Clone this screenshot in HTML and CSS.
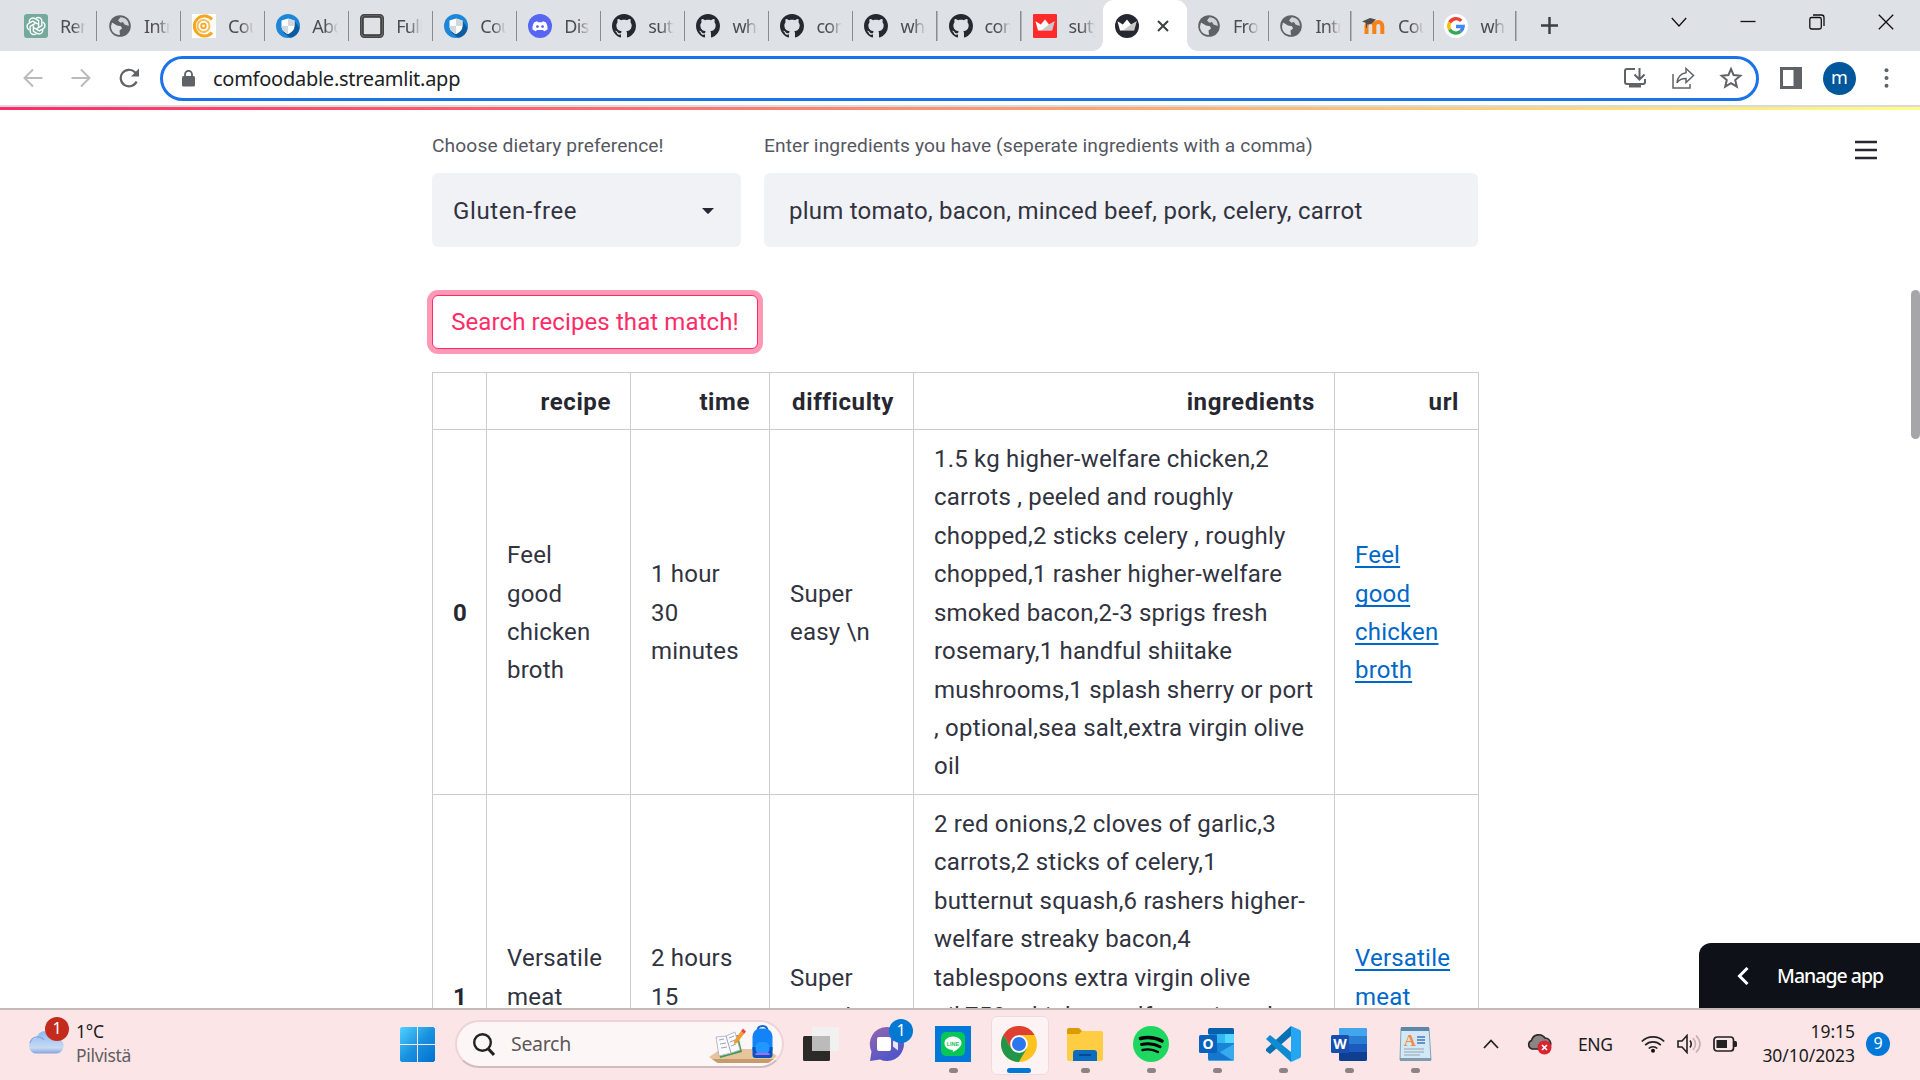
FILE: index.html
```html
<!DOCTYPE html>
<html lang="en">
<head>
<meta charset="utf-8">
<title>Comfoodable</title>
<link rel="stylesheet" href="styles.css">
</head>
<body>
<svg class="sprite" aria-hidden="true">
  <symbol id="globe" viewBox="0 0 24 24"><circle cx="12" cy="12" r="10.8" fill="#5f6368"/><path fill="#dee1e6" d="M4 8.500L9 11.500l4 .8 1 2.200-2.500 2 .5 4.500C6.500 21 3 17 3 12.500z"/><path fill="#dee1e6" d="M12.500 3.300L10 6.500l2.500 2.200 2.500-.7 1.500 2.500 4.300 1.500C21 7 17.500 3.500 12.500 3.300z" opacity=".9"/></symbol>
  <symbol id="github" viewBox="0 0 16 16"><path fill="#24292f" d="M8 0C3.580 0 0 3.580 0 8c0 3.540 2.290 6.530 5.470 7.590.4.070.55-.17.55-.38 0-.19-.01-.82-.01-1.490-2.010.37-2.530-.49-2.690-.94-.09-.23-.48-.94-.82-1.130-.28-.15-.68-.52-.01-.53.63-.01 1.080.58 1.230.82.72 1.210 1.870.87 2.330.66.07-.52.28-.87.51-1.070-1.780-.2-3.640-.89-3.640-3.950 0-.87.31-1.590.82-2.150-.08-.2-.36-1.020.08-2.120 0 0 .67-.21 2.200.82.64-.18 1.320-.27 2-.27s1.360.09 2 .27c1.530-1.040 2.200-.82 2.200-.82.44 1.100.16 1.920.08 2.120.51.56.82 1.270.82 2.150 0 3.070-1.870 3.750-3.650 3.950.29.25.54.73.54 1.480 0 1.070-.01 1.930-.01 2.200 0 .21.15.46.55.38A8.010 8.010 0 0 0 16 8c0-4.420-3.580-8-8-8z"/></symbol>
  <symbol id="shield" viewBox="0 0 24 24"><circle cx="12" cy="12" r="12" fill="#1c86da"/><path d="M18 6l5.500 8a12 12 0 0 1-9.500 9.800L7 18z" fill="#0c5c9f"/><path d="M12 4.500l6.500 2V12c0 4-3 6.500-6.500 8-3.500-1.500-6.500-4-6.500-8V6.500z" fill="#fff"/><path d="M12 4.500l6.500 2V12H12zM5.500 12H12v8c-3.500-1.500-6.500-4-6.500-8z" fill="#d3d7dc"/></symbol>
  <symbol id="crown" viewBox="0 0 24 24"><path d="M2.500 7.200l5.300 3.300L12 5.500l4 5 5.700-3.300-2.600 9.300H5z" fill="#fff"/><path d="M21.700 7.200l-2.600 9.300H8L16 10.500z" fill="#888" opacity=".45"/></symbol>
</svg>

<header class="tabs">
  <div class="tab"><svg class="fav" viewBox="0 0 24 24"><rect width="24" height="24" rx="3" fill="#75a99b"/><g fill="none" stroke="#fff" stroke-width="1.400"><path id="petal" d="M12 4.200a3.700 3.700 0 0 1 5.900 3.200v4.200l-5.200 3"/><use href="#petal" transform="rotate(60 12 12)"/><use href="#petal" transform="rotate(120 12 12)"/><use href="#petal" transform="rotate(180 12 12)"/><use href="#petal" transform="rotate(240 12 12)"/><use href="#petal" transform="rotate(300 12 12)"/></g></svg><span>Ren</span></div>
  <div class="tab"><svg class="fav"><use href="#globe"/></svg><span>Intr</span></div>
  <div class="tab"><svg class="fav" viewBox="0 0 24 24"><rect width="24" height="24" fill="#fff"/><g fill="none" stroke="#f5a623"><path d="M20 5.500a10 10 0 1 0 0 13" stroke-width="3"/><circle cx="11.500" cy="12" r="6" stroke-width="2" stroke="#f8bd55"/><circle cx="11.500" cy="12" r="2.300" stroke-width="1.800"/></g></svg><span>Cou</span></div>
  <div class="tab"><svg class="fav"><use href="#shield"/></svg><span>Abo</span></div>
  <div class="tab"><svg class="fav" viewBox="0 0 24 24"><rect x=".7" y=".7" width="22.600" height="22.600" rx="3.500" fill="#777" stroke="#444" stroke-width="1.400"/><rect x="3" y="3" width="18" height="18" rx="1.500" fill="#dfe1e4" stroke="#333" stroke-width="1.500"/></svg><span>Full</span></div>
  <div class="tab"><svg class="fav"><use href="#shield"/></svg><span>Cou</span></div>
  <div class="tab"><svg class="fav" viewBox="0 0 24 24"><circle cx="12" cy="12" r="12" fill="#5865f2"/><path fill="#fff" d="M9.300 7.300c-1.300.2-2.300.6-3.100 1C4.800 10.500 4.300 13 4.500 15.600c1 .8 2.200 1.300 3.500 1.600l.8-1.300h6.400l.8 1.300c1.300-.3 2.500-.8 3.500-1.600.2-2.600-.3-5.100-1.700-7.300-.8-.4-1.800-.8-3.100-1l-.5.900H9.800z"/><circle cx="9.400" cy="12.600" r="1.400" fill="#5865f2"/><circle cx="14.600" cy="12.600" r="1.400" fill="#5865f2"/></svg><span>Dis</span></div>
  <div class="tab"><svg class="fav"><use href="#github"/></svg><span>suty</span></div>
  <div class="tab"><svg class="fav"><use href="#github"/></svg><span>wha</span></div>
  <div class="tab"><svg class="fav"><use href="#github"/></svg><span>com</span></div>
  <div class="tab"><svg class="fav"><use href="#github"/></svg><span>wha</span></div>
  <div class="tab"><svg class="fav"><use href="#github"/></svg><span>com</span></div>
  <div class="tab before-active"><svg class="fav" viewBox="0 0 24 24"><rect width="24" height="24" rx="1" fill="#ff2b2b"/><use href="#crown"/></svg><span>suty</span></div>
  <div class="tab active"><svg class="fav" viewBox="0 0 24 24"><circle cx="12" cy="12" r="12" fill="#262730"/><use href="#crown"/></svg><svg class="tab-close" viewBox="0 0 12 12"><path d="M1 1l10 10M11 1L1 11" stroke="#3c4043" stroke-width="2"/></svg></div>
  <div class="tab late"><svg class="fav"><use href="#globe"/></svg><span>Fro</span></div>
  <div class="tab late"><svg class="fav"><use href="#globe"/></svg><span>Intr</span></div>
  <div class="tab late"><svg class="fav" viewBox="0 0 24 24"><path d="M4.500 20V12a3.600 3.600 0 0 1 7.800 0v8M12.300 20V12a3.800 3.800 0 0 1 8 0v8" fill="none" stroke="#f98012" stroke-width="4"/><path d="M0 7.500L8 4l6 1.500-5 4.500-4 .5v3l-1 .5V9z" fill="#4d4d4d"/></svg><span>Cou</span></div>
  <div class="tab late"><svg class="fav" viewBox="0 0 24 24"><circle cx="12" cy="12" r="12" fill="#fff"/><g fill="none" stroke-width="3.400"><path d="M17.300 6.900A7.200 7.200 0 0 0 5.700 8.500" stroke="#ea4335"/><path d="M5.700 8.500a7.200 7.200 0 0 0 0 7" stroke="#fbbc05"/><path d="M5.700 15.500a7.200 7.200 0 0 0 11 1.800" stroke="#34a853"/><path d="M16.700 17.300a7.200 7.200 0 0 0 2.400-4.800H12" stroke="#4285f4"/></g></svg><span>wh</span></div>
  <svg class="new-tab" viewBox="0 0 18 18"><path d="M9 0v18M0 9h18" stroke="#3c4043" stroke-width="2.600"/></svg>
  <div class="window-buttons">
    <svg viewBox="0 0 16 16"><path d="M.8 4L8 12l7.200-8"/></svg>
    <svg viewBox="0 0 16 16"><path d="M.5 7.500h15"/></svg>
    <svg viewBox="0 0 16 16"><rect x=".8" y="3.500" width="11.500" height="11.500" rx="1.800"/><path d="M4 1h8.500Q15 1 15 3.500V12"/></svg>
    <svg viewBox="0 0 16 16"><path d="M.8.800l14.400 14.400M15.200.8L.8 15.200"/></svg>
  </div>
</header>

<nav class="toolbar">
  <svg class="nav-icon faded" viewBox="0 0 20 20"><path d="M19.500 10H2M10 1.500L1.500 10l8.500 8.500"/></svg>
  <svg class="nav-icon faded" viewBox="0 0 20 20"><path d="M.5 10H18M10 1.500l8.500 8.500-8.500 8.500"/></svg>
  <svg class="nav-icon reload" viewBox="0 0 20 20"><path d="M17.600 13.500A8.300 8.300 0 1 1 16 4.300L18 6.500"/><path d="M20 .5v8h-8z" fill="#5f6368" stroke="none"/></svg>
  <div class="omnibox">
    <svg class="lock" viewBox="0 0 13 17"><rect y="6" width="13" height="10.500" rx="1.500" fill="#5f6368"/><path d="M3 7V4.300a3.500 3.500 0 0 1 7 0V7" fill="none" stroke="#5f6368" stroke-width="1.800"/></svg>
    <span class="url">comfoodable.streamlit.app</span>
    <svg class="box-icon" viewBox="0 0 24 24"><path d="M12 3H4Q2 3 2 5v11q0 2 2 2h16q2 0 2-2v-3M16.500 2v11M11.500 8.500l5 5 5-5" /><path d="M6 18h12v3.500H6z" fill="#5f6368" stroke="none"/></svg>
    <svg class="box-icon thin" viewBox="0 0 24 24"><path d="M2 8v14h17v-4"/><path d="M15 2.500L22.500 9.500 15 16.500V12.500c-4 0-7 1-9 4.500.5-5.500 3.500-9.500 9-10.300z"/></svg>
    <svg class="box-icon" viewBox="0 0 24 24"><path d="M12 3l2.600 6.100 6.700.6-5.100 4.400 1.600 6.500L12 17.100l-5.800 3.500 1.600-6.500-5.100-4.400 6.700-.6z"/></svg>
  </div>
  <svg class="panel-icon" viewBox="0 0 22 22"><path fill="#5f6368" fill-rule="evenodd" d="M0 0h22v22H0zM3 3v16h10.500V3z"/></svg>
  <div class="avatar">m</div>
  <svg class="dots" viewBox="0 0 4 20"><circle cx="2" cy="2.200" r="2"/><circle cx="2" cy="10" r="2"/><circle cx="2" cy="17.800" r="2"/></svg>
</nav>

<main class="page">
  <div class="rainbow"></div>
  <svg class="menu" viewBox="0 0 22 20"><path d="M0 2h22M0 10h22M0 18h22" stroke="#262730" stroke-width="2.600"/></svg>
  <div class="scroll-thumb"></div>
  <div class="content">
    <div class="fields">
      <div class="field"><label>Choose dietary preference!</label>
        <div class="input select"><span>Gluten-free</span><svg viewBox="0 0 12 6"><path d="M0 0h12L6.500 5.700h-1z" fill="#262730"/></svg></div></div>
      <div class="field wide"><label>Enter ingredients you have (seperate ingredients with a comma)</label>
        <div class="input text-input">plum tomato, bacon, minced beef, pork, celery, carrot</div></div>
    </div>
    <button class="search-button">Search recipes that match!</button>
    <table class="recipes">
      <colgroup><col class="c-index"><col class="c-recipe"><col class="c-time"><col class="c-difficulty"><col class="c-ingredients"><col class="c-url"></colgroup>
      <thead><tr><th></th><th>recipe</th><th>time</th><th>difficulty</th><th>ingredients</th><th>url</th></tr></thead>
      <tbody>
        <tr>
          <th>0</th>
          <td>Feel<br>good<br>chicken<br>broth</td>
          <td>1 hour<br>30<br>minutes</td>
          <td>Super<br>easy \n</td>
          <td>1.5 kg higher-welfare chicken,2<br>carrots , peeled and roughly<br>chopped,2 sticks celery , roughly<br>chopped,1 rasher higher-welfare<br>smoked bacon,2-3 sprigs fresh<br>rosemary,1 handful shiitake<br>mushrooms,1 splash sherry or port<br>, optional,sea salt,extra virgin olive<br>oil</td>
          <td><a href="#">Feel<br>good<br>chicken<br>broth</a></td>
        </tr>
        <tr class="second">
          <th>1</th>
          <td>Versatile<br>meat<br>&nbsp;</td>
          <td>2 hours<br>15<br>&nbsp;</td>
          <td>Super<br>easy \n</td>
          <td>2 red onions,2 cloves of garlic,3<br>carrots,2 sticks of celery,1<br>butternut squash,6 rashers higher-<br>welfare streaky bacon,4<br>tablespoons extra virgin olive<br>oil,750 g higher-welfare minced<br>&nbsp;<br>&nbsp;<br>&nbsp;<br>&nbsp;</td>
          <td><a href="#">Versatile<br>meat<br>&nbsp;</a></td>
        </tr>
      </tbody>
    </table>
  </div>
  <div class="manage"><svg viewBox="0 0 12 18"><path d="M10.500 1L2.500 9l8 8" fill="none" stroke="#fff" stroke-width="3"/></svg>Manage app</div>
</main>

<footer class="taskbar">
  <div class="weather">
    <svg viewBox="0 0 36 24"><defs><linearGradient id="cl" x2="0" y2="1"><stop stop-color="#8db8f2"/><stop offset=".75" stop-color="#c8daf3"/><stop offset="1" stop-color="#7fa5df"/></linearGradient></defs><path d="M8 23.500a7.500 7.500 0 0 1-1-15A10.500 10.500 0 0 1 27 8a7.800 7.800 0 0 1 1 15.500z" fill="url(#cl)"/><path d="M1 13a8 8 0 0 1 14-3" fill="none" stroke="#7fa9e8" stroke-width="1.200"/></svg>
    <b class="badge red">1</b>
    <div><p>1°C</p><p class="muted">Pilvistä</p></div>
  </div>

  <svg class="start" viewBox="0 0 35 35"><defs><linearGradient id="win" x2="1" y2="1"><stop stop-color="#4fd2ff"/><stop offset=".5" stop-color="#1a92e0"/><stop offset="1" stop-color="#0070cf"/></linearGradient></defs><path fill="url(#win)" d="M1.500 0H17v17H0V1.500zM18 0h15.500L35 1.500V17H18zM0 18h17v17H1.500L0 33.500zM18 18h17v15.500L33.500 35H18z"/></svg>

  <div class="search">
    <svg class="glass" viewBox="0 0 22 23"><circle cx="9.500" cy="9.500" r="8.300" fill="none" stroke="#222" stroke-width="2.400"/><path d="M15.500 16l5.500 6" stroke="#222" stroke-width="3"/></svg>
    <span>Search</span>
    <svg class="books" viewBox="0 0 68 38"><path d="M0 32l12-8h46l10 7-8 7H8z" fill="#e8c49c"/><path d="M3 34h62l-6 4H9z" fill="#c89b6c"/><path d="M8 14l21-4 4 17-22 6z" fill="#3f9a50"/><path d="M7 12l10-1 9-4 5 18-9 3-12 3z" fill="#fafaff" stroke="#b8bac9"/><path d="M17 11l5 17M10 15l5-1M11 19l6-1M12 23l6-1M20 13l5-2M21 17l5-2M22 21l5-2" stroke="#9ca1b5" stroke-width="1"/><path d="M25 16l7-10 3 3-7 9-3 1z" fill="#f49b32"/><path d="M32 6l2-2.500 3 3L35 9z" fill="#e04b44"/><path d="M48.500 6q0-5 5-5t5 5" fill="none" stroke="#1267d3" stroke-width="2"/><rect x="43.500" y="3.500" width="20" height="28.500" rx="8" fill="#1284f8"/><path d="M43.500 22h20v8q0 3-3 3h-14q-3 0-3-3z" fill="#0753bf"/><rect x="46.500" y="17" width="14" height="12" rx="5" fill="#2198ff"/><path d="M46.500 29h14" stroke="#ae68ec" stroke-width="2"/></svg>
  </div>

  <div class="apps">
    <div class="app"><svg viewBox="0 0 36 36"><rect x="0" y="10" width="27" height="25" rx="1.500" fill="#2c2a29"/><rect x="9" y="1" width="27" height="24" rx="1.500" fill="#f1f1f1"/><path d="M9 10h18v15H9z" fill="#bbb"/></svg></div>
    <div class="app"><svg viewBox="0 0 36 36"><defs><linearGradient id="chat" x2=".6" y2="1"><stop stop-color="#9567ae"/><stop offset="1" stop-color="#4f55c9"/></linearGradient></defs><path d="M18 1a17 17 0 1 1-7 32.500L1 35l1.500-9.500A17 17 0 0 1 18 1z" fill="url(#chat)"/><rect x="8" y="11" width="14" height="14" rx="2" fill="#fff"/><path d="M24 15.500l5-4v13l-5-4z" fill="#e8e7fa"/></svg><b class="badge blue">1</b></div>
    <div class="app running"><svg viewBox="0 0 36 36"><path fill="#0078d7" d="M0 0h36v36H0z"/><rect x="6" y="6" width="24" height="24" rx="5" fill="#06c755"/><path d="M18 10.500c5 0 8.500 3 8.500 6.700 0 3.500-5 6.800-8 8.600-.8.400-.8-.5-.7-1.800-4.800-.2-8.300-3-8.300-6.800 0-3.700 3.500-6.700 8.500-6.700z" fill="#fff"/><text x="18" y="19.500" class="line-word">LINE</text></svg></div>
    <div class="app current"><svg viewBox="0 0 36 36"><circle cx="18" cy="18" r="18" fill="#fcc31f"/><path d="M2.400 9A18 18 0 0 1 33.600 9H18L10.200 22.500z" fill="#df3f32"/><path d="M2.400 9l7.800 13.500L18 27l-.2 9A18 18 0 0 1 2.400 9z" fill="#21964a"/><path d="M17.800 36l8-13.500L18 27l-4-1z" fill="#21964a"/><circle cx="18" cy="18" r="8.800" fill="#fff"/><circle cx="18" cy="18" r="7" fill="#2b78ee"/></svg></div>
    <div class="app running"><svg viewBox="0 0 36 36"><path d="M0 4q0-2 2-2h10l4 4v4H0z" fill="#dc9a05"/><path d="M0 8h12l3-3h19q2 0 2 2v26q0 2-2 2H2q-2 0-2-2z" fill="#ffcd43"/><path d="M6 35v-8q0-3 3-3h18q3 0 3 3v8z" fill="#0c6cc0"/><path d="M12 29h12" stroke="#06498f" stroke-width="2"/></svg></div>
    <div class="app running"><svg viewBox="0 0 36 36"><circle cx="18" cy="18" r="18" fill="#1ed760"/><g fill="none" stroke="#000" stroke-linecap="round"><path d="M7.500 12.500q11-3 21.500 2.500" stroke-width="3.600"/><path d="M8.500 18.500q10-2.500 18.500 2.200" stroke-width="3"/><path d="M9.500 24q8.500-2 15.500 2" stroke-width="2.400"/></g></svg></div>
    <div class="app running"><svg viewBox="0 0 36 36"><path d="M10 2h23q2 0 2 2v29q0 2-2 2H11q-2 0-2-2z" fill="#1685d8"/><path d="M9 4q0-2 2-2h22q2 0 2 2v4H9z" fill="#0762ae"/><path d="M18 8h8v9h-8z" fill="#30b7ef"/><path d="M26 8h9v9h-9z" fill="#54d6ff"/><path d="M9 33l26-15v15q0 2-2 2H11z" fill="#39a9ee"/><path d="M9 19l24 15H11q-2 0-2-2z" fill="#1677cf"/><rect y="9" width="18" height="18" rx="1.500" fill="#0a62bd"/><text x="9" y="23" class="letter">O</text></svg></div>
    <div class="app running"><svg viewBox="0 0 36 36"><path d="M1 23L26 0v10L5 28l-4-3z" fill="#0871b3"/><path d="M26 0l9 4q1 .5 1 2v24q0 1.500-1 2l-9 4z" fill="#25a6f2"/><path d="M1 13l4-4 21 17v10z" fill="#108ad1"/></svg></div>
    <div class="app running"><svg viewBox="0 0 36 36"><rect x="8" y="2" width="28" height="33" rx="2" fill="#1a5bbd"/><path d="M8 10V4q0-2 2-2h24q2 0 2 2v6z" fill="#42a5ee"/><path d="M8 10h28v8H8z" fill="#2b7cd3"/><path d="M8 26h28v7q0 2-2 2H10q-2 0-2-2z" fill="#103f91"/><rect y="9" width="18" height="18" rx="1.500" fill="#174fb1"/><text x="9" y="23" class="letter">W</text></svg></div>
    <div class="app running"><svg viewBox="0 0 36 36"><path d="M4 2h28l2 32H3z" fill="#d3e8f6" stroke="#86a2b7"/><path d="M4 1h28v4H4z" fill="#5e87a7"/><path d="M3 32h31v3H3z" fill="#809dae"/><text x="13" y="20" class="wordpad">A</text><path d="M20 11h8M20 14h8M20 17h8" stroke="#4677b9" stroke-width="1.500"/><path d="M7 23h20M7 26h20M7 29h16" stroke="#a8bac7" stroke-width="1.300"/></svg></div>
  </div>

  <div class="tray">
    <svg class="caret" viewBox="0 0 16 10"><path d="M1 9l7-7.500L15 9" fill="none" stroke="#222" stroke-width="1.800"/></svg>
    <svg class="cloud" viewBox="0 0 25 22"><path d="M5 16a4.500 4.500 0 0 1-.5-8.500A7.500 7.500 0 0 1 18 5a6 6 0 0 1 3 11z" fill="#8b8586" stroke="#2b2728" stroke-width="1.600"/><circle cx="17.500" cy="14.500" r="7" fill="#d9252e"/><path d="M15 12l5 5m0-5l-5 5" stroke="#fff" stroke-width="1.700"/></svg>
    <span class="lang">ENG</span>
    <svg class="wifi" viewBox="0 0 24 18"><g fill="none" stroke="#222" stroke-width="1.700"><path d="M.8 6.500a15.800 15.800 0 0 1 22.400 0"/><path d="M4.200 10.200a11 11 0 0 1 15.600 0"/><path d="M7.700 13.500a6.100 6.100 0 0 1 8.600 0"/></g><circle cx="12" cy="15.800" r="2" fill="#111"/></svg>
    <svg class="volume" viewBox="0 0 24 20"><g fill="none" stroke="#222" stroke-width="1.600"><path d="M1 7h4l5-5.500v17L5 13H1z"/><path d="M13 6.500q2.500 3.500 0 7"/><path d="M16 4q5 6 0 12M19 1.500q8 8.500 0 17" stroke="#c5afb2"/></g></svg>
    <svg class="battery" viewBox="0 0 24 16"><rect x="1" y="1" width="19.500" height="14" rx="3" fill="none" stroke="#222" stroke-width="1.700"/><rect x="3.500" y="4" width="10.500" height="8" fill="#222"/><path d="M21 5h1.500q1.500 0 1.500 1.500v3q0 1.500-1.500 1.500H21z" fill="#222"/></svg>
    <div class="clock"><p>19:15</p><p>30/10/2023</p></div>
    <b class="count">9</b>
  </div>
</footer>
</body>
</html>
```
FILE: styles.css
```css
* { box-sizing: border-box; }
body { margin: 0; width: 1920px; height: 1080px; overflow: hidden; display: flex; flex-direction: column; background: #fff; font-family: "Noto Sans", sans-serif; }
p { margin: 0; }
svg { display: block; flex: none; }
.sprite { position: absolute; width: 0; height: 0; }

/* tab strip */
.tabs { height: 51px; flex: none; display: flex; align-items: center; padding-left: 13px; background: #dee1e6; }
.tab { flex: none; width: 84.050px; height: 51px; padding-left: 11px; display: flex; align-items: center; gap: 12px; background: linear-gradient(#888b90, #888b90) 100% 11px / 1.500px 30px no-repeat; color: #4a4d51; font-size: 18px; }
.tab span { width: 26px; overflow: hidden; white-space: nowrap; letter-spacing: -.7px; -webkit-mask-image: linear-gradient(90deg, #000 50%, transparent); mask-image: linear-gradient(90deg, #000 50%, transparent); }
.fav { width: 24px; height: 24px; margin-top: 1px; }
.tab.before-active { background: none; width: 81.400px; }
.tab.active { width: 84px; padding-left: 12px; gap: 18px; border-radius: 11px 11px 0 0; background: #fff; position: relative; }
.tab.active::before, .tab.active::after { content: ""; position: absolute; bottom: 0; width: 10px; height: 10px; }
.tab.active::before { right: 100%; background: radial-gradient(circle at 0 0, #dee1e6 9.500px, #fff 10px); }
.tab.active::after { left: 100%; background: radial-gradient(circle at 100% 0, #dee1e6 9.500px, #fff 10px); }
.tab-close { width: 12px; height: 12px; }
.tab.late { width: 82.500px; padding-left: 10px; }
.new-tab { width: 17px; height: 17px; margin-left: 24px; }
.window-buttons { margin: 0 26px 8px auto; display: flex; gap: 53px; }
.window-buttons svg { width: 16px; height: 16px; fill: none; stroke: #111; stroke-width: 1.300; }

/* address bar */
.toolbar { height: 56px; flex: none; display: flex; align-items: center; padding-left: 23px; border-bottom: 2px solid #d9dade; background: #fff; }
.nav-icon { width: 20px; height: 20px; margin-right: 28px; fill: none; stroke: #5f6368; stroke-width: 2.200; }
.nav-icon.faded { stroke: #b9bbbe; stroke-width: 2; }
.nav-icon.reload { margin-right: 21px; }
.omnibox { width: 1599px; height: 45px; padding: 0 13px 0 19px; display: flex; align-items: center; border: 3px solid #1a73e8; border-radius: 23px; color: #202124; }
.lock { width: 13px; height: 17px; }
.url { margin: 0 auto 0 18px; font-size: 20px; letter-spacing: -.26px; }
.box-icon { width: 24px; height: 24px; margin-left: 24px; fill: none; stroke: #5f6368; stroke-width: 2; }
.box-icon.thin { stroke-width: 1.500; }
.panel-icon { width: 22px; height: 22px; margin-left: 21px; }
.avatar { width: 33px; height: 33px; margin-left: 21px; border-radius: 50%; background: #01579b; color: #fff; font: 18px/31px "Noto Sans", sans-serif; text-align: center; }
.dots { width: 5px; height: 20px; margin-left: 28px; fill: #5f6368; }

/* app page */
.page { flex: none; height: 901px; position: relative; overflow: hidden; font-family: Roboto, sans-serif; font-size: 24px; line-height: 38.400px; letter-spacing: .2px; color: #31333f; }
.rainbow { height: 3px; background: linear-gradient(90deg, #ff2b67, #ff6f6f 33%, #ffb272 63%, #ffff80); }
.menu { position: absolute; left: 1855px; top: 33px; width: 22px; height: 20px; }
.scroll-thumb { position: absolute; right: 0; top: 183px; width: 9px; height: 149px; border-radius: 5px; background: #a6a6aa; }
.content { width: 1047px; margin-left: 432px; padding-top: 18px; }
.fields { display: flex; gap: 23px; }
.field { width: 309px; }
.field.wide { width: 714px; }
.field label { display: block; height: 45px; font-size: 19.200px; line-height: 36px; letter-spacing: .11px; white-space: nowrap; color: #555761; }
.input { height: 74px; padding: 2px 21px 0; display: flex; align-items: center; border-radius: 6px; background: #f0f2f6; }
.select { justify-content: space-between; padding-right: 27px; }
.select span { letter-spacing: .6px; }
.select svg { width: 12px; height: 6px; }
.text-input { padding-left: 25px; letter-spacing: .24px; }
.search-button { display: block; margin: 48px 0 23px; height: 54px; width: 326px; padding: 0; border: 1px solid #ff2b67; border-radius: 6px; background: #fff; box-shadow: 0 0 0 5px #ff99b5; color: #ff2b67; font: inherit; letter-spacing: .1px; }
.recipes { width: 1047px; table-layout: fixed; border-collapse: collapse; }
.c-index { width: 54px; }
.c-recipe { width: 144px; }
.c-time { width: 139px; }
.c-difficulty { width: 144px; }
.c-ingredients { width: 421px; }
.c-url { width: 144px; }
.recipes th, .recipes td { padding: 9.500px 20px 8.500px; border: 1px solid #ccc; vertical-align: middle; text-align: left; white-space: nowrap; }
.recipes th { color: #262730; font-weight: 700; }
.recipes thead th { height: 57px; text-align: right; letter-spacing: .6px; padding: 10px 19px 8px; }
.recipes tbody tr { height: 365px; }
.recipes tbody tr.second { height: 403px; }
.recipes a { color: #0068c9; text-underline-offset: 3px; text-decoration-thickness: 2px; text-decoration-skip-ink: none; }
.manage { position: absolute; right: 0; bottom: 0; width: 221px; height: 65px; padding-left: 38px; display: flex; align-items: center; gap: 28px; border-top-left-radius: 12px; background: #0e1117; color: #fff; font: 500 19.500px "Noto Sans", sans-serif; letter-spacing: -1px; white-space: nowrap; }
.manage svg { width: 12px; height: 18px; }

/* taskbar */
.taskbar { height: 72px; flex: none; padding-bottom: 2px; display: flex; align-items: center; border-top: 2px solid #c7b8ba; background: #fbe5e7; color: #1d1b1b; font-size: 17.500px; line-height: 24px; letter-spacing: -.3px; }
.weather { position: relative; width: 371px; margin-left: 29px; display: flex; align-items: center; gap: 11px; }
.weather svg { width: 36px; height: 24px; margin-bottom: 4px; }
.weather p, .clock p { position: relative; top: -1px; }
.muted { color: #645d5e; }
.badge { position: absolute; width: 24px; height: 24px; border-radius: 50%; color: #fff; font-size: 16px; font-weight: 400; line-height: 23px; text-align: center; }
.red { left: 16px; top: -3px; background: #c42b1c; }
.blue { right: 7px; top: -7px; background: #0078d4; }
.start { width: 35px; height: 35px; }
.search { width: 329px; height: 48px; margin-left: 20px; padding: 0 5px 0 16px; display: flex; align-items: center; border: 2px solid #ecd4d7; border-bottom-color: #d0bcbe; border-radius: 24px; background: #fdf6f7; color: #5c5758; font-size: 19.500px; }
.glass { width: 22px; height: 23px; }
.search span { margin: 0 auto 0 16px; }
.books { width: 68px; height: 38px; }
.apps { display: flex; margin-left: 4px; }
.app { width: 66px; height: 36px; display: flex; justify-content: center; position: relative; }
.app svg { width: 36px; height: 36px; position: relative; }
.app.running::after { content: ""; position: absolute; left: 29px; top: 42px; width: 9px; height: 5px; border-radius: 3px; background: #8d8284; }
.app.current::before { content: ""; position: absolute; left: 5px; top: -10px; width: 56px; height: 57px; border: 1px solid #f0dadd; border-radius: 6px; background: #fdf2f4; }
.app.current::after { content: ""; position: absolute; left: 21px; top: 42px; width: 24px; height: 5px; border-radius: 3px; background: #0078d4; }
.line-word { fill: #06c755; font: 700 5.500px "Liberation Sans", sans-serif; letter-spacing: 0; text-anchor: middle; }
.letter { fill: #fff; font: 700 14px "Noto Sans", sans-serif; letter-spacing: 0; text-anchor: middle; }
.wordpad { fill: #f58b3c; font: 700 17px "Liberation Serif", serif; letter-spacing: 0; text-anchor: middle; }
.tray { margin-left: auto; margin-right: 30px; display: flex; align-items: center; }
.caret { width: 16px; height: 10px; margin-right: 28px; }
.cloud { width: 25px; height: 22px; margin-right: 26px; }
.lang { width: 37px; margin-right: 26px; letter-spacing: -.4px; }
.wifi { width: 24px; height: 18px; margin-right: 12px; }
.volume { width: 24px; height: 20px; margin-right: 12px; }
.battery { width: 24px; height: 16px; }
.clock { width: 118px; text-align: right; letter-spacing: -.05px; }
.count { width: 24px; height: 24px; margin-left: 11px; border-radius: 50%; background: #0078d7; color: #fff; font-size: 16px; font-weight: 400; text-align: center; line-height: 23px; }
```
